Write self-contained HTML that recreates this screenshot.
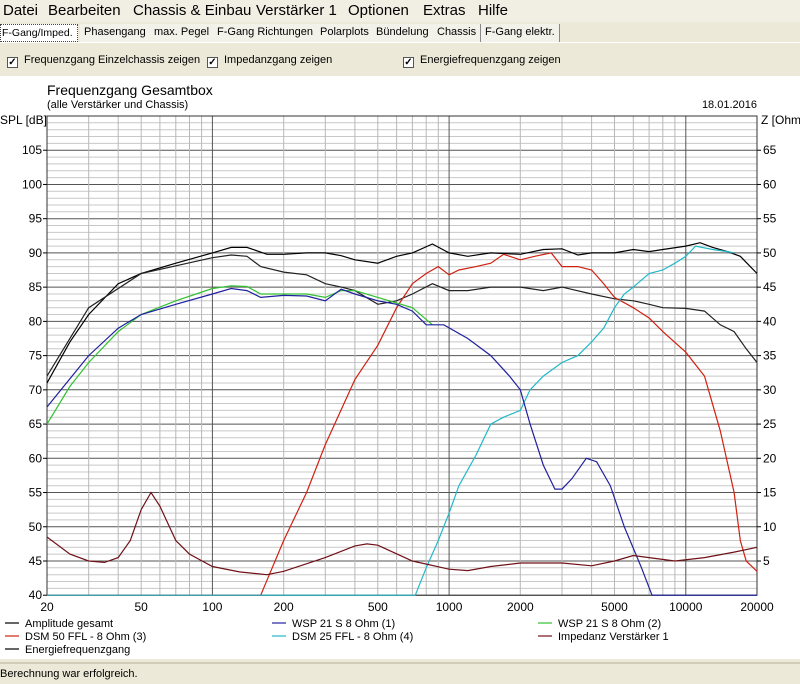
<!DOCTYPE html>
<html><head><meta charset="utf-8"><style>
*{margin:0;padding:0;box-sizing:border-box}
body{width:800px;height:684px;overflow:hidden;background:#ece9d8;font-family:"Liberation Sans",Arial,sans-serif;position:relative}
.menu{position:absolute;top:0;left:0;width:800px;height:22px;background:#f1efe4;font-size:15px;color:#000}
.menu span{position:absolute;top:2px;white-space:nowrap}
.tabs{position:absolute;top:22px;left:0;height:21px;width:800px;font-size:11px;border-bottom:1px solid #fff}
.tab{position:absolute;top:2px;height:18px;line-height:17px;border-right:1px solid #888;padding:0 4px;background:#f3f2ea;white-space:nowrap}
.chk{position:absolute;top:54px;font-size:11px;white-space:nowrap}
.chk i{display:inline-block;width:11px;height:11px;border:1px solid #555;background:#fff;vertical-align:-2px;margin-right:6px;font-style:normal;font-size:10px;line-height:9px;text-align:center;font-weight:bold}
.white{position:absolute;top:76px;left:0;width:800px;height:583px;background:#fff}
.status{position:absolute;top:662px;left:0;width:800px;height:22px;border-top:2px solid #d0ccb8;font-size:11px;padding:4px 0 0 0}
svg text{font-family:"Liberation Sans",Arial,sans-serif}
</style></head><body>
<div class="menu"><span style="left:3px">Datei</span><span style="left:48px">Bearbeiten</span><span style="left:133px">Chassis &amp; Einbau</span><span style="left:256px">Verstärker 1</span><span style="left:348px">Optionen</span><span style="left:423px">Extras</span><span style="left:478px">Hilfe</span></div>
<div class="tabs">
<div class="tab" style="left:0;background:#fff;border:1px dotted #444;width:78px;padding:0 1px;font-size:10.5px">F-Gang/Imped.</div>
<div class="tab" style="left:80px">Phasengang</div>
<div class="tab" style="left:150px">max. Pegel</div>
<div class="tab" style="left:213px">F-Gang Richtungen</div>
<div class="tab" style="left:316px">Polarplots</div>
<div class="tab" style="left:372px">Bündelung</div>
<div class="tab" style="left:433px">Chassis</div>
<div class="tab" style="left:481px">F-Gang elektr.</div>
</div>
<div class="chk" style="left:7px"><i>✓</i>Frequenzgang Einzelchassis zeigen</div>
<div class="chk" style="left:207px"><i>✓</i>Impedanzgang zeigen</div>
<div class="chk" style="left:403px"><i>✓</i>Energiefrequenzgang zeigen</div>
<div class="white"></div>
<svg id="s" width="800" height="684" style="position:absolute;top:0;left:0"></svg>
<div class="status">Berechnung war erfolgreich.</div>
<script>
var X0=47,X1=757,Y110=116,PX=6.846;
function fx(f){return X0+(Math.log10(f)-Math.log10(20))/3*(X1-X0);}
function fy(d){return Y110+(110-d)*PX;}
var s='';
for(var d=40;d<=110;d++){var y=fy(d).toFixed(1);s+='<line x1="'+X0+'" x2="'+X1+'" y1="'+y+'" y2="'+y+'" stroke="'+(d%5==0?'#555':'#c8c8c8')+'" stroke-width="1"/>';}
var fs=[20,30,40,50,60,70,80,90,100,200,300,400,500,600,700,800,900,1000,2000,3000,4000,5000,6000,7000,8000,9000,10000,20000];
fs.forEach(function(f){var x=fx(f).toFixed(1);var major=(f==100||f==1000||f==10000||f==20||f==20000);s+='<line x1="'+x+'" x2="'+x+'" y1="'+Y110+'" y2="'+fy(40)+'" stroke="'+(major?'#555':'#b8b8b8')+'"/>';});
s+='<rect x="'+X0+'" y="'+Y110+'" width="'+(X1-X0)+'" height="'+(fy(40)-Y110)+'" fill="none" stroke="#333"/>';
for(var d=40;d<=105;d+=5){var y=fy(d);s+='<text x="42" y="'+(y+4)+'" font-size="12" text-anchor="end">'+d+'</text><line x1="43" x2="47" y1="'+y+'" y2="'+y+'" stroke="#000"/>';
if(d>40)s+='<text x="763" y="'+(y+4)+'" font-size="12">'+(d-40)+'</text><line x1="757" x2="761" y1="'+y+'" y2="'+y+'" stroke="#000"/>';}
[20,50,100,200,500,1000,2000,5000,10000,20000].forEach(function(f){s+='<text x="'+fx(f)+'" y="611" font-size="12" text-anchor="middle">'+f+'</text>';});
s+='<text x="0" y="124" font-size="12">SPL [dB]</text><text x="761" y="124" font-size="12">Z [Ohm]</text>';
s+='<text x="47" y="95" font-size="14">Frequenzgang Gesamtbox</text><text x="47" y="108" font-size="11">(alle Verstärker und Chassis)</text><text x="757" y="108" font-size="11" text-anchor="end">18.01.2016</text>';
function P(a,c){var p='';for(var i=0;i<a.length;i+=2){var d=Math.max(40,a[i+1]);p+=(i?'L':'M')+fx(a[i]).toFixed(1)+','+fy(d).toFixed(1);}s+='<path d="'+p+'" fill="none" stroke="'+c+'" stroke-width="1.2"/>';}
P([20,71,25,77,30,81,40,85.5,50,87,70,88.5,100,90,120,90.8,140,90.8,170,89.8,200,89.8,250,90,300,90,350,89.6,400,89,500,88.5,600,89.5,700,90,850,91.3,1000,90,1200,89.5,1500,90,2000,89.8,2500,90.5,3000,90.6,3500,89.7,4000,90,5000,90,6000,90.5,7000,90.2,8000,90.5,10000,91,11500,91.5,13000,90.8,15000,90.2,17000,89.5,20000,87],'#000');
P([20,72,30,82,50,87,100,89.3,120,89.7,140,89.5,160,88,200,87.2,250,86.8,300,85.5,350,85,400,84.5,500,82.5,600,83,700,84,850,85.5,1000,84.5,1200,84.5,1500,85,2000,85,2500,84.5,3000,85,4000,84,5000,83.3,6000,83,7000,82.5,8000,82,10000,81.9,12000,81.5,14000,79.5,16000,78.5,18000,76,20000,74],'#222');
P([20,40,160,40,200,48,250,55,300,62,400,71.5,500,76.5,600,82,700,85.5,800,87,900,88,1000,86.8,1100,87.5,1300,88,1500,88.5,1700,89.8,2000,89,2300,89.5,2700,90,3000,88,3500,88,4000,87.5,4500,85.5,5000,83.5,6000,82,7000,80.5,8000,78.5,10000,75.5,12000,72,14000,64,16000,55,17000,48,18000,45,20000,43.5],'#d02010');
P([20,40,720,40,800,44,900,48,1000,52,1100,56,1300,60.5,1500,65,1700,66,2000,67,2200,70,2500,72,3000,74,3500,75,4000,77,4500,79,5000,82,5500,84,6000,85,7000,87,8000,87.5,9000,88.5,10000,89.5,11000,91,13000,90.5,15000,90.2,16000,90],'#20b8c8');
P([20,65,25,70.5,30,74,40,78.5,50,81,70,83,100,84.8,120,85.2,140,85.1,160,84,200,84,250,84,300,83.5,350,84.5,400,84.5,500,83.5,700,82,850,79.5],'#30c030');
P([20,67.5,30,75,40,79,50,81,70,82.5,100,84,120,84.8,140,84.5,160,83.5,200,83.8,250,83.7,300,83,350,84.7,400,84,500,83,600,82.5,700,81.5,800,79.5,950,79.5,1200,77.5,1500,75,1800,72,2000,70,2200,65,2500,59,2800,55.5,3000,55.5,3300,57,3800,60,4200,59.5,4800,56,5500,50,6500,44,7200,40,20000,40],'#2020a0');
P([20,48.5,25,46,30,45,35,44.8,40,45.5,45,48,50,52.5,55,55,60,53,70,48,80,46,100,44.2,130,43.4,170,43,200,43.5,300,45.5,400,47.2,450,47.5,500,47.3,700,45,1000,43.8,1200,43.6,1500,44.2,2000,44.7,3000,44.7,4000,44.3,5000,45,6000,45.8,7000,45.5,9000,45,12000,45.5,16000,46.3,20000,47],'#701018');
function L(x,y,c,t){s+='<line x1="'+x+'" x2="'+(x+14)+'" y1="'+y+'" y2="'+y+'" stroke="'+c+'" stroke-width="1.2"/><text x="'+(x+20)+'" y="'+(y+4)+'" font-size="11">'+t+'</text>';}
L(5,623,'#000','Amplitude gesamt');L(272,623,'#2020a0','WSP 21 S 8 Ohm (1)');L(538,623,'#30c030','WSP 21 S 8 Ohm (2)');
L(5,636,'#d02010','DSM 50 FFL - 8 Ohm (3)');L(272,636,'#20b8c8','DSM 25 FFL - 8 Ohm (4)');L(538,636,'#701018','Impedanz Verstärker 1');
L(5,649,'#000','Energiefrequenzgang');
document.getElementById('s').innerHTML=s;
</script>
</body></html>
